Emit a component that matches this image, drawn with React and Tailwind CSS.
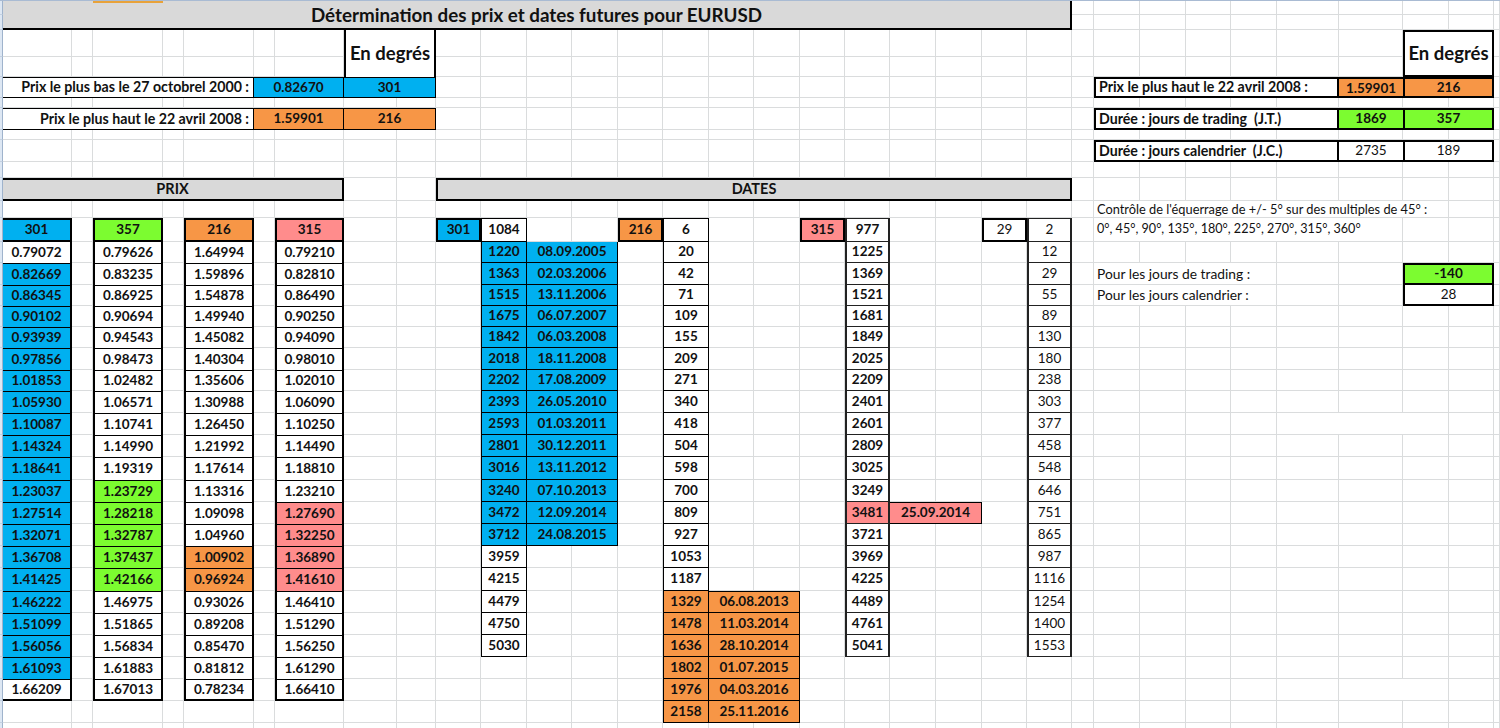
import React from 'react'

// tracks taken from the sheet: column widths and row heights in px
const SHEET =
  'grid grid-cols-[3px_69px_21px_70px_21px_70px_21px_69px_53px_39px_45px_46px_45px_46px_45px_46px_45px_46px_45px_45px_46px_46px_45px_45px_22px_46px_46px_45px_46px_62px_64px_46px_45px_6px] grid-rows-[14px_15px_27px_20px_21px_10px_22px_10px_22px_16px_23px_17px_24px_21px_22px_21px_21px_21px_22px_21px_22px_22px_22px_23px_22px_22px_22px_22px_23px_22px_22px_22px_22px_22px_22px_22px]'

const BLUE = 'bg-[#00b0f0]'
const GREEN = 'bg-[#7cfc30]'
const ORANGE = 'bg-[#f79646]'
const PINK = 'bg-[#ff8c8c]'
const WHITE = 'bg-white'

const GRIDLINE = 'border-r border-b border-[#dadcdd]'
const STRIP = 'bg-[#dde7f3] border-r border-b border-r-[#9fb3cc] border-b-[#c3d0e1]'
const OVERFLOW = 'bg-white border-r border-b border-[#dadcdd]'

const prixCols = [
    {
        col: 'col-[2/3]', sides: 'border-r-2', head: '301', bg: BLUE, from: 1, to: 19,
        vals: ['0.79072', '0.82669', '0.86345', '0.90102', '0.93939', '0.97856', '1.01853', '1.05930', '1.10087', '1.14324', '1.18641', '1.23037', '1.27514', '1.32071', '1.36708', '1.41425', '1.46222', '1.51099', '1.56056', '1.61093', '1.66209'],
    },
    {
        col: 'col-[4/5]', sides: 'border-x-2', head: '357', bg: GREEN, from: 11, to: 15,
        vals: ['0.79626', '0.83235', '0.86925', '0.90694', '0.94543', '0.98473', '1.02482', '1.06571', '1.10741', '1.14990', '1.19319', '1.23729', '1.28218', '1.32787', '1.37437', '1.42166', '1.46975', '1.51865', '1.56834', '1.61883', '1.67013'],
    },
    {
        col: 'col-[6/7]', sides: 'border-x-2', head: '216', bg: ORANGE, from: 14, to: 15,
        vals: ['1.64994', '1.59896', '1.54878', '1.49940', '1.45082', '1.40304', '1.35606', '1.30988', '1.26450', '1.21992', '1.17614', '1.13316', '1.09098', '1.04960', '1.00902', '0.96924', '0.93026', '0.89208', '0.85470', '0.81812', '0.78234'],
    },
    {
        col: 'col-[8/9]', sides: 'border-x-2', head: '315', bg: PINK, from: 12, to: 15,
        vals: ['0.79210', '0.82810', '0.86490', '0.90250', '0.94090', '0.98010', '1.02010', '1.06090', '1.10250', '1.14490', '1.18810', '1.23210', '1.27690', '1.32250', '1.36890', '1.41610', '1.46410', '1.51290', '1.56250', '1.61290', '1.66410'],
    },
]

const colK = ['1220', '1363', '1515', '1675', '1842', '2018', '2202', '2393', '2593', '2801', '3016', '3240', '3472', '3712', '3959', '4215', '4479', '4750', '5030']
const datesBlue = ['08.09.2005', '02.03.2006', '13.11.2006', '06.07.2007', '06.03.2008', '18.11.2008', '17.08.2009', '26.05.2010', '01.03.2011', '30.12.2011', '13.11.2012', '07.10.2013', '12.09.2014', '24.08.2015']
const colO = ['20', '42', '71', '109', '155', '209', '271', '340', '418', '504', '598', '700', '809', '927', '1053', '1187', '1329', '1478', '1636', '1802', '1976', '2158']
const datesOrange = ['06.08.2013', '11.03.2014', '28.10.2014', '01.07.2015', '04.03.2016', '25.11.2016']
const colS = ['1225', '1369', '1521', '1681', '1849', '2025', '2209', '2401', '2601', '2809', '3025', '3249', '3481', '3721', '3969', '4225', '4489', '4761', '5041']
const colW = ['12', '29', '55', '89', '130', '180', '238', '303', '377', '458', '548', '646', '751', '865', '987', '1116', '1254', '1400', '1553']

function C({ className = '', children }) {
    return <div className={`flex items-center justify-center leading-none ${className}`}>{children}</div>
}

function PrixCol({ col, sides, head, bg, from, to, vals }) {
    return (
        <>
            <C className={`${col} row-[13/14] border-y-2 ${sides} border-black ${bg} font-bold`}>{head}</C>
            <div className={`${col} row-[14/35] grid grid-rows-subgrid`}>
                {vals.map((v, i) => (
                    <C
                        key={v}
                        className={`${sides} border-black font-bold ${i > 0 ? 'border-t' : ''} ${i === vals.length - 1 ? 'border-b-2' : ''} ${i >= from && i <= to ? bg : WHITE}`}
                    >
                        {v}
                    </C>
                ))}
            </div>
        </>
    )
}

function Stack({ place, items, cell }) {
    return (
        <div className={`${place} grid grid-rows-subgrid`}>
            {items.map((it, i) => (
                <C key={i} className={`${cell(i)}`}>{it}</C>
            ))}
        </div>
    )
}

export default function App() {
    const bgCells = []
    for (let r = 0; r < 36; r++) {
        for (let c = 0; c < 34; c++) {
            bgCells.push(<div key={`${r}-${c}`} className={c === 0 ? STRIP : GRIDLINE} />)
        }
    }

    return (
        <div className="w-[1500px] h-[728px] overflow-hidden bg-white border-t border-[#a9bbd3] font-['Lato',sans-serif] text-[13.5px] text-[#111]">
            <div className="grid">
                <div className={`col-start-1 row-start-1 ${SHEET}`}>{bgCells}</div>

                <div className={`col-start-1 row-start-1 ${SHEET}`}>
                    {/* titre */}
                    <C className="col-[2/25] row-[1/3] bg-[#d9d9d9] border-r-2 border-b-2 border-black text-[18.8px] font-bold pt-px">
                        Détermination des prix et dates futures pour EURUSD
                    </C>
                    <div className="col-[4/5] row-[1/2] self-start h-[2px] bg-[#e8a23a]" />

                    {/* bloc gauche */}
                    <C className="col-[9/11] row-[3/5] bg-white border-x-2 border-black text-[18.5px] font-bold">En degrés</C>
                    <C className="col-[2/7] row-[5/6] bg-white border-y border-r border-black text-[14.2px] font-bold justify-end pr-1">
                        Prix le plus bas le 27 octobrel 2000 :
                    </C>
                    <C className={`col-[7/9] row-[5/6] ${BLUE} border-y border-r border-black font-bold`}>0.82670</C>
                    <C className={`col-[9/11] row-[5/6] ${BLUE} border-y border-r border-black font-bold`}>301</C>
                    <C className="col-[2/7] row-[7/8] bg-white border-y border-r border-black text-[14.2px] font-bold justify-end pr-1">
                        Prix le plus haut le 22 avril 2008 :
                    </C>
                    <C className={`col-[7/9] row-[7/8] ${ORANGE} border-y border-r border-black font-bold`}>1.59901</C>
                    <C className={`col-[9/11] row-[7/8] ${ORANGE} border-y border-r border-black font-bold`}>216</C>

                    {/* PRIX */}
                    <C className="col-[2/9] row-[11/12] bg-[#d9d9d9] border-y-2 border-r-2 border-black text-[14.5px] font-bold">PRIX</C>
                    {prixCols.map(p => <PrixCol key={p.head} {...p} />)}

                    {/* DATES */}
                    <C className="col-[11/25] row-[11/12] bg-[#d9d9d9] border-2 border-black text-[14.5px] font-bold">DATES</C>

                    <C className={`col-[11/12] row-[13/14] ${BLUE} border-2 border-black font-bold`}>301</C>
                    <C className="col-[12/13] row-[13/14] bg-white border border-black font-bold">1084</C>
                    <Stack
                        place="col-[12/13] row-[14/33]"
                        items={colK}
                        cell={i => `border-x border-b border-black font-bold ${i < 14 ? BLUE : WHITE}`}
                    />
                    <Stack
                        place="col-[13/15] row-[14/28]"
                        items={datesBlue}
                        cell={() => `border-r border-b border-black font-bold ${BLUE}`}
                    />

                    <C className={`col-[15/16] row-[13/14] ${ORANGE} border-2 border-black font-bold`}>216</C>
                    <C className="col-[16/17] row-[13/14] bg-white border border-black font-bold">6</C>
                    <Stack
                        place="col-[16/17] row-[14/36]"
                        items={colO}
                        cell={i => `border-x border-b border-black font-bold ${i >= 16 ? ORANGE : WHITE}`}
                    />
                    <Stack
                        place="col-[17/19] row-[30/36]"
                        items={datesOrange}
                        cell={i => `border-r border-b border-black font-bold ${ORANGE} ${i === 0 ? 'border-t' : ''}`}
                    />

                    <C className={`col-[19/20] row-[13/14] ${PINK} border-2 border-black font-bold`}>315</C>
                    <C className="col-[20/21] row-[13/14] bg-white border-y border-x-2 border-[#222] font-bold">977</C>
                    <Stack
                        place="col-[20/21] row-[14/33]"
                        items={colS}
                        cell={i => `border-x-2 border-b border-[#222] font-bold ${i === 12 ? PINK : WHITE}`}
                    />
                    <C className={`col-[21/23] row-[26/27] ${PINK} border-y border-r border-black font-bold`}>25.09.2014</C>

                    <C className="col-[23/24] row-[13/14] bg-white border-2 border-black">29</C>
                    <C className="col-[24/25] row-[13/14] bg-white border-y border-x-2 border-[#222]">2</C>
                    <Stack
                        place="col-[24/25] row-[14/33]"
                        items={colW}
                        cell={() => `border-x-2 border-b border-[#222] ${WHITE}`}
                    />

                    {/* bloc droit */}
                    <C className="col-[32/34] row-[3/5] bg-white border-2 border-black text-[18.5px] font-bold">En degrés</C>

                    <C className="col-[26/31] row-[5/6] bg-white border-2 border-black text-[14.2px] font-bold justify-start pl-[3px]">
                        Prix le plus haut le 22 avril 2008 :
                    </C>
                    <C className={`col-[31/32] row-[5/6] ${ORANGE} border-y-2 border-black font-bold pt-[2px]`}>1.59901</C>
                    <C className={`col-[32/34] row-[5/6] ${ORANGE} border-2 border-black font-bold`}>216</C>

                    <C className="col-[26/31] row-[7/8] bg-white border-2 border-black text-[14.2px] font-bold justify-start pl-[3px] whitespace-pre">
                        Durée : jours de trading  (J.T.)
                    </C>
                    <C className={`col-[31/32] row-[7/8] ${GREEN} border-y-2 border-black font-bold`}>1869</C>
                    <C className={`col-[32/34] row-[7/8] ${GREEN} border-2 border-black font-bold`}>357</C>

                    <C className="col-[26/31] row-[9/10] bg-white border-2 border-black text-[14.2px] font-bold justify-start pl-[3px] whitespace-pre">
                        Durée : jours calendrier  (J.C.)
                    </C>
                    <C className="col-[31/32] row-[9/10] bg-white border-y-2 border-black">2735</C>
                    <C className="col-[32/34] row-[9/10] bg-white border-2 border-black">189</C>

                    <C className={`col-[26/33] row-[12/13] ${OVERFLOW} justify-start pl-[3px] text-[12.8px]`}>
                        Contrôle de l'équerrage de +/- 5° sur des multiples de 45° :
                    </C>
                    <C className={`col-[26/32] row-[13/14] ${OVERFLOW} justify-start pl-[3px] text-[12.6px]`}>
                        0°, 45°, 90°, 135°, 180°, 225°, 270°, 315°, 360°
                    </C>

                    <C className={`col-[26/30] row-[15/16] ${OVERFLOW} justify-start pl-[3px] text-[13.8px]`}>Pour les jours de trading :</C>
                    <C className={`col-[32/34] row-[15/16] ${GREEN} border-2 border-black font-bold`}>-140</C>
                    <C className={`col-[26/30] row-[16/17] ${OVERFLOW} justify-start pl-[3px] text-[13.8px]`}>Pour les jours calendrier :</C>
                    <C className="col-[32/34] row-[16/17] bg-white border-x-2 border-b-2 border-black">28</C>

                    <div className={`col-[30/33] row-[22/23] ${OVERFLOW}`} />
                    <div className={`col-[31/33] row-[34/35] ${OVERFLOW}`} />
                </div>
            </div>
        </div>
    )
}
